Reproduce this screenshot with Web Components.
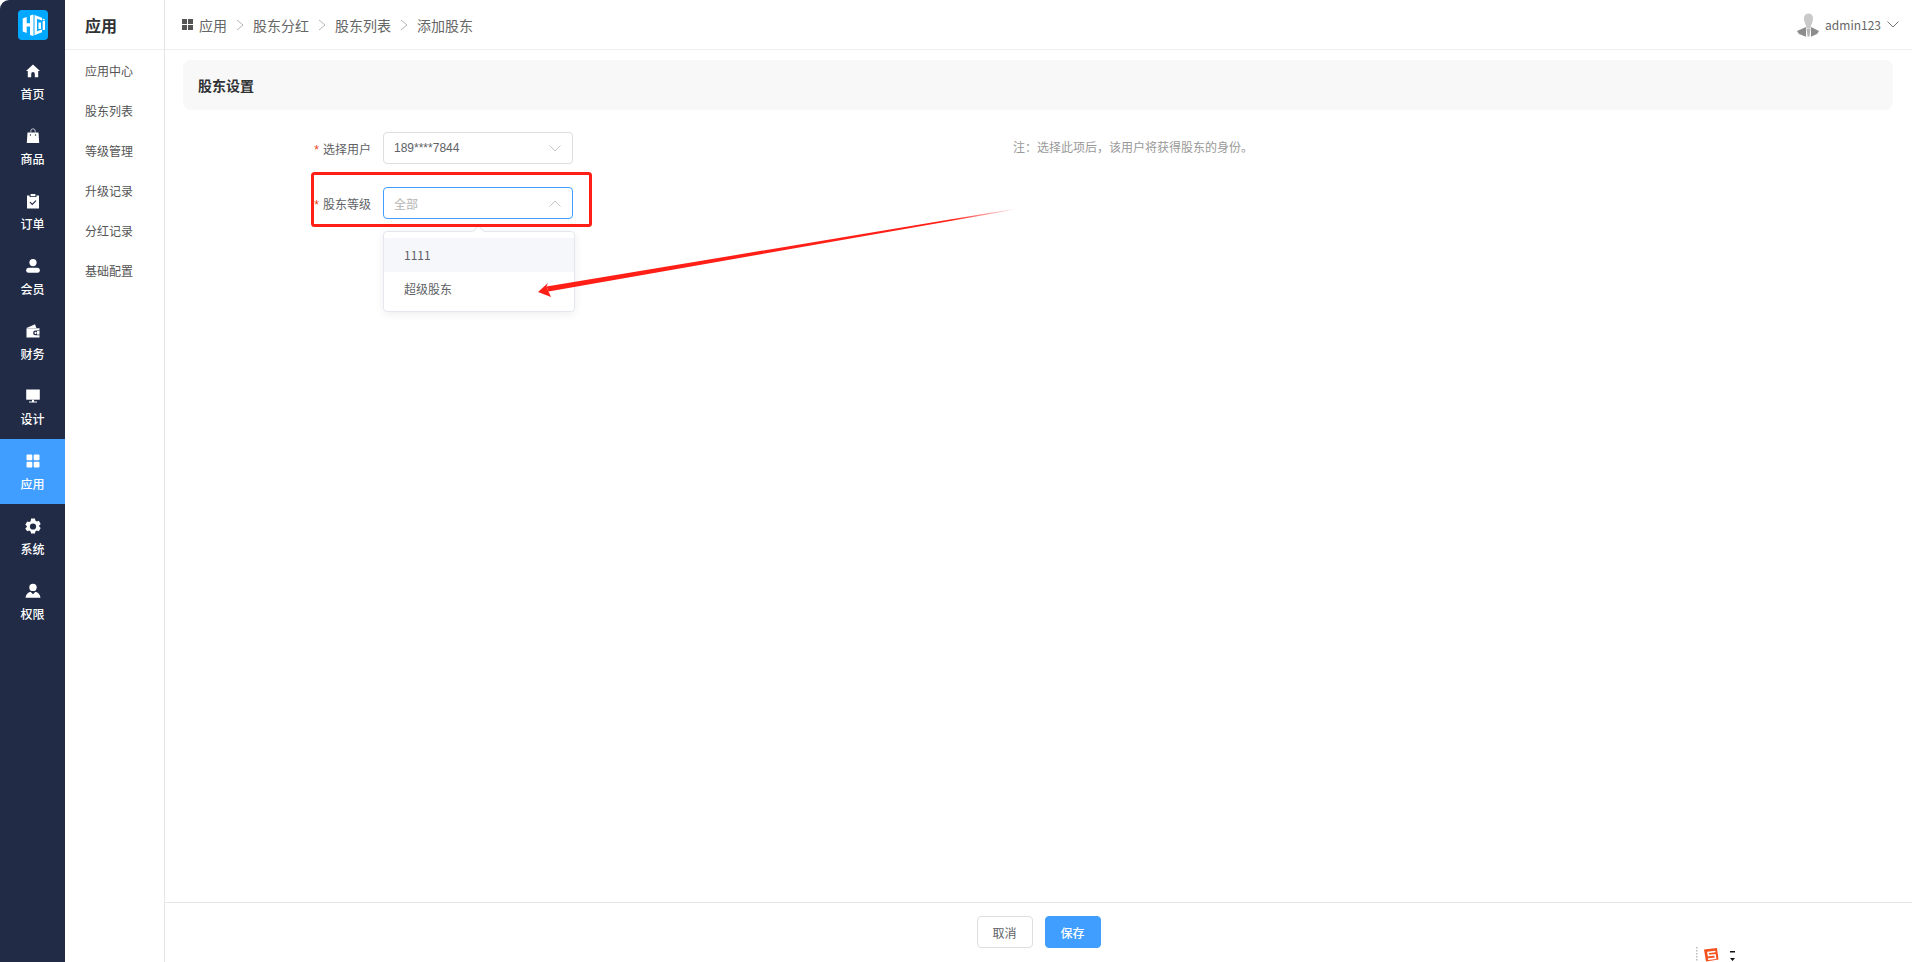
<!DOCTYPE html>
<html lang="zh">
<head>
<meta charset="utf-8">
<title>添加股东</title>
<style>
    html, body { margin: 0; height: 100%; background: #ffffff; }
    body { font-family: "Noto Sans CJK SC", "Noto Sans", sans-serif; font-size: 12px; color: #606266; overflow: hidden; }
</style>
</head>
<body>
<app-shell>
    <main-nav slot="nav">
        <nav-item label="首页" icon="home"></nav-item>
        <nav-item label="商品" icon="bag"></nav-item>
        <nav-item label="订单" icon="order"></nav-item>
        <nav-item label="会员" icon="user"></nav-item>
        <nav-item label="财务" icon="wallet"></nav-item>
        <nav-item label="设计" icon="monitor"></nav-item>
        <nav-item label="应用" icon="apps" active></nav-item>
        <nav-item label="系统" icon="gear"></nav-item>
        <nav-item label="权限" icon="person"></nav-item>
    </main-nav>
    <sub-nav slot="sub" title-text="应用">
        <sub-item>应用中心</sub-item>
        <sub-item>股东列表</sub-item>
        <sub-item>等级管理</sub-item>
        <sub-item>升级记录</sub-item>
        <sub-item>分红记录</sub-item>
        <sub-item>基础配置</sub-item>
    </sub-nav>
    <top-bar slot="top"></top-bar>
    <shareholder-form slot="content"></shareholder-form>
    <form-footer slot="footer"></form-footer>
</app-shell>
<mark-up></mark-up>

<script>
const ICONS = {
    home: `<path d="M8 1.500 1 8h1.800v6.300H6.200v-3.400a1.800 1.800 0 0 1 3.600 0v3.400h3.400V8H15z"/>`,
    bag: `<path d="M2.500 4.500h11l.7 10.500H1.800z"/><path d="M5.800 4.500V3a2.200 2.200 0 0 1 4.400 0v1.500" fill="none" stroke="#fff" stroke-width=".7"/><circle cx="5.500" cy="7" r=".7" fill="#212b46"/><circle cx="10.500" cy="7" r=".7" fill="#212b46"/>`,
    order: `<path d="M2 2.500h2.600V4h6.800V2.500H14v13H2z"/><path d="M5.600 1h4.800v2.200H5.600z"/><path d="m5 9.200 2.200 2.200L11 7.600" fill="none" stroke="#212b46" stroke-width="1.200"/>`,
    user: `<circle cx="8" cy="4.600" r="3.600"/><rect x="1.200" y="9.800" width="13.600" height="5" rx="2.500"/>`,
    wallet: `<path d="M1.500 5 10 1.200l1.400 3.800z"/><path d="M1.500 5.200h13v2.300h-4a2.400 2.400 0 0 0 0 4.800h4v2.300h-13z"/><circle cx="10.600" cy="9.900" r="1.100"/><path d="M12 8h2.500v3.600H12z"/>`,
    monitor: `<path d="M1.200 1.500h13.600v10.200H1.200z"/><path d="M7 11.700h2v1.900h3v.9H4v-.9h3z"/>`,
    apps: `<rect x="1.500" y="1.500" width="5.800" height="5.800" rx="1"/><rect x="8.700" y="1.500" width="5.800" height="5.800" rx="1"/><rect x="1.500" y="8.700" width="5.800" height="5.800" rx="1"/><rect x="8.700" y="8.700" width="5.800" height="5.800" rx="1"/>`,
    gear: `<path fill-rule="evenodd" d="M6.100.6h3.800l.5 2 1.400.8 2-.6 1.900 3.300-1.500 1.400v1l1.500 1.400-1.900 3.300-2-.6-1.400.8-.5 2H6.100l-.5-2-1.400-.8-2 .6L.3 10.500l1.500-1.400v-1L.3 6.700l1.900-3.300 2 .6 1.400-.8zM8 5.400a3.100 3.100 0 1 0 0 6.200 3.100 3.100 0 0 0 0-6.200z"/>`,
    person: `<circle cx="8" cy="4.400" r="3.700"/><path d="M5.500 8.800 8 11.300l2.500-2.500c2.600.4 4.600 2.700 5 6H.5c.4-3.300 2.400-5.600 5-6z"/>`
};

function define(name, css, html) {
    customElements.define(name, class extends HTMLElement {
        constructor() {
            super();
            const shadow = this.attachShadow({ mode: "open" });
            shadow.innerHTML = `<style>${css}</style>` + (typeof html === "function" ? html(this) : html);
        }
    });
}

define("app-shell", /*css*/`
    :host { display: grid; grid-template-columns: 65px 100px 1fr; height: 962px; }
    .nav, .sub { grid-row: 1; }
    .main { display: flex; flex-direction: column; height: 962px; min-width: 0; }
    .content { flex: 1; min-height: 0; }
`, /*html*/`
    <div class="nav"><slot name="nav"></slot></div>
    <div class="sub"><slot name="sub"></slot></div>
    <div class="main">
        <slot name="top"></slot>
        <div class="content"><slot name="content"></slot></div>
        <slot name="footer"></slot>
    </div>
`);

define("main-nav", /*css*/`
    :host { display: block; height: 962px; background: #212b46; border-top-left-radius: 9px; }
    .logo { display: flex; justify-content: center; height: 49px; padding-top: 10px; box-sizing: border-box; }
`, /*html*/`
    <div class="logo">
        <svg width="30" height="30" viewBox="0 0 30 30">
            <rect width="30" height="30" rx="4" fill="#00a8ff"/>
            <path fill="#fff" d="M4.700 8.500 8.700 7v16l-4-1.500zM8.700 13.300H12v3.200H8.700zM12 5.500l3.500-1V26l-3.500-1z"/>
            <path fill="#fff" d="M16.500 5 24 7.800v2.700l-5-1.700v12.400l5-1.700v2.700l-7.500 3zM24.700 11H27v9h-2.300zM20.500 12.500H23V19h-2.500zM24.700 8.500l2.300 1v.8h-2.300z"/>
        </svg>
    </div>
    <slot></slot>
`);

define("nav-item", /*css*/`
    :host { display: flex; flex-direction: column; align-items: center; height: 65px; box-sizing: border-box; padding-top: 14px; color: #ffffff; font-size: 12px; line-height: 18px; font-weight: 500; }
    :host([active]) { background: #3f9eff; }
    svg { display: block; width: 16px; height: 16px; fill: #fff; margin-bottom: 6px; }
`, (el) => /*html*/`
    <svg viewBox="0 0 16 16">${ICONS[el.getAttribute("icon")]}</svg>
    <span>${el.getAttribute("label")}</span>
`);

define("sub-nav", /*css*/`
    :host { display: block; height: 962px; box-sizing: border-box; border-right: 1px solid #e6e6e8; }
    h2 { margin: 0; height: 50px; box-sizing: border-box; border-bottom: 1px solid #eeeeee; padding-left: 20px; font-size: 16px; font-weight: 700; line-height: 50px; color: #303133; }
    .list { padding-top: 1px; }
`, (el) => /*html*/`
    <h2>${el.getAttribute("title-text")}</h2>
    <div class="list"><slot></slot></div>
`);

define("sub-item", /*css*/`
    :host { display: block; height: 40px; line-height: 40px; padding-left: 20px; font-size: 12px; color: #555555; }
`, `<slot></slot>`);

define("top-bar", /*css*/`
    :host { display: flex; align-items: center; height: 50px; box-sizing: border-box; border-bottom: 1px solid #eeeeee; padding: 0 13px 0 17px; font-size: 14px; color: #666666; }
    .grid { width: 11px; height: 11px; fill: #555; margin-right: 6px; }
    .sep { width: 8px; height: 12px; margin: 0 9px; fill: none; stroke: #b5b5b5; }
    .user { margin-left: auto; display: flex; align-items: center; font-size: 12px; }
    .avatar { width: 22px; height: 24px; margin-right: 6px; }
    .chev { width: 12px; height: 7px; margin-left: 6px; fill: none; stroke: #777; }
`, /*html*/`
    <svg class="grid" viewBox="0 0 11 11"><rect width="5" height="5"/><rect x="6" width="5" height="5"/><rect y="6" width="5" height="5"/><rect x="6" y="6" width="5" height="5"/></svg>
    <span>应用</span>
    <svg class="sep" viewBox="0 0 8 12"><path d="m1 1 6 5-6 5"/></svg>
    <span>股东分红</span>
    <svg class="sep" viewBox="0 0 8 12"><path d="m1 1 6 5-6 5"/></svg>
    <span>股东列表</span>
    <svg class="sep" viewBox="0 0 8 12"><path d="m1 1 6 5-6 5"/></svg>
    <span>添加股东</span>
    <div class="user">
        <svg class="avatar" viewBox="0 0 22 24">
            <path fill="#c9c9c9" d="M7 5a4.500 4.500 0 0 1 9 0c0 3-1 6-2 7.500v2l-2.500 1-2.500-1v-2C8 11 7 8 7 5z"/>
            <path fill="#8c8c8c" d="M9 14 0 18l2 3 7 2.800zM14 14l8 4-2 3-6 2.800z"/>
            <path fill="#b5b5b5" d="M9.500 15.500h4l-1 8h-2z"/>
        </svg>
        <span>admin123</span>
        <svg class="chev" viewBox="0 0 12 7"><path d="m.5.5 5.500 5.500 5.500-5.500"/></svg>
    </div>
`);

define("select-box", /*css*/`
    :host { display: flex; align-items: center; justify-content: space-between; width: 190px; height: 32px; box-sizing: border-box; border: 1px solid #dcdee2; border-radius: 4px; padding: 0 11px 0 10px; font-family: "Liberation Sans", "Noto Sans CJK SC", sans-serif; font-size: 12px; color: #606266; background: #fff; }
    :host([open]) { border-color: #3f9eff; color: #b4b4b4; }
    svg { width: 12px; height: 7px; fill: none; stroke: #c4c4c4; }
    :host([open]) svg { transform: rotate(180deg); }
`, /*html*/`
    <slot></slot>
    <svg viewBox="0 0 12 7"><path d="m.5.5 5.500 5.500 5.500-5.500"/></svg>
`);

define("form-row", /*css*/`
    :host { display: flex; align-items: center; height: 32px; }
    label { width: 200px; padding-right: 12px; box-sizing: border-box; text-align: right; font-size: 12px; color: #606266; }
    i { color: #ed4014; font-style: normal; margin-right: 4px; font-family: "Liberation Sans", sans-serif; }
`, (el) => /*html*/`
    <label><i>*</i>${el.getAttribute("label")}</label>
    <slot></slot>
`);

define("select-drop", /*css*/`
    :host { position: absolute; left: 200px; top: 44px; z-index: 2; display: block; width: 192px; height: 81px; box-sizing: border-box; padding: 6px 0; background: #fff; border: 1px solid #e4e7ed; border-radius: 4px; box-shadow: 0 2px 10px rgba(0,0,0,.07); font-size: 12px; color: #606266; }
    .tip { position: absolute; left: 90px; top: -5px; width: 8px; height: 8px; background: #fff; border-left: 1px solid #e4e7ed; border-top: 1px solid #e4e7ed; transform: rotate(45deg); }
    div.opt { height: 34px; line-height: 34px; padding-left: 20px; }
    div.opt.hover { background: #f5f7fa; }
`, /*html*/`
    <div class="tip"></div>
    <div class="opt hover">1111</div>
    <div class="opt">超级股东</div>
`);

define("shareholder-form", /*css*/`
    :host { display: block; padding: 10px 19px 0 18px; }
    .head { height: 50px; line-height: 50px; padding-left: 15px; background: #f8f8f8; border-radius: 8px; font-size: 14px; font-weight: 700; color: #303133; }
    .body { padding-top: 22px; display: flex; flex-direction: column; gap: 23px; }
    .first { display: flex; }
    .note { margin-left: 440px; line-height: 30px; font-size: 12px; color: #999999; }
    .second { position: relative; }
`, /*html*/`
    <div class="head">股东设置</div>
    <div class="body">
        <div class="first">
            <form-row label="选择用户"><select-box>189****7844</select-box></form-row>
            <div class="note">注：选择此项后，该用户将获得股东的身份。</div>
        </div>
        <div class="second">
            <form-row label="股东等级"><select-box open>全部</select-box></form-row>
            <select-drop></select-drop>
        </div>
    </div>
`);

define("form-footer", /*css*/`
    :host { display: flex; justify-content: center; gap: 12px; height: 60px; box-sizing: border-box; padding: 13px 0 14px; border-top: 1px solid #e6e6ea; }
    button { width: 56px; height: 32px; padding: 0; border-radius: 4px; font: 12px "Noto Sans CJK SC", sans-serif; border: 1px solid #dcdee2; background: #fff; color: #606266; }
    button.primary { background: #3f9eff; border-color: #3f9eff; color: #fff; font-weight: 500; }
`, /*html*/`
    <button>取消</button>
    <button class="primary">保存</button>
`);

// screenshot annotations and the input method badge, all lying over the page
define("mark-up", /*css*/`
    :host { position: absolute; inset: 0; display: block; pointer-events: none; z-index: 5; }
    svg { position: absolute; left: 0; top: 0; }
`, /*html*/`
    <svg width="1912" height="962" viewBox="0 0 1912 962">
        <rect x="312.500" y="173.500" width="278" height="52" rx="2" fill="none" stroke="#ff1f17" stroke-width="3"/>
        <defs>
            <linearGradient id="fade" gradientUnits="userSpaceOnUse" x1="1016" y1="209" x2="950" y2="219">
                <stop offset="0" stop-color="#ff1f17" stop-opacity="0"/>
                <stop offset="1" stop-color="#ff1f17"/>
            </linearGradient>
        </defs>
        <path fill="url(#fade)" d="M1016 208.500V209.500L548.500 291.500 546.500 286.500z"/>
        <path fill="#ff1f17" d="M538 292 548 283 546.500 286.500 548.500 291.500 551 297z"/>
        <path fill="#bbb" d="M1696 947h1.500v1.500H1696zM1696 950h1.500v1.500H1696zM1696 953h1.500v1.500H1696zM1696 956h1.500v1.500H1696zM1696 959h1.500v1.500H1696z"/>
        <path fill="#f4511e" d="M1704 949.500 1717 948l1.500 11.500-12.500 2z"/>
        <path fill="none" stroke="#fff" stroke-width="1.600" d="M1715.500 951.500 1708 952.400 1708.500 955.600 1715 954.800 1715.500 958.200 1708 959.100"/>
        <path fill="#111" d="M1730 951h5v1.500h-5zM1730 958h5l-2.500 3z"/>
    </svg>
`);
</script>
</body>
</html>
